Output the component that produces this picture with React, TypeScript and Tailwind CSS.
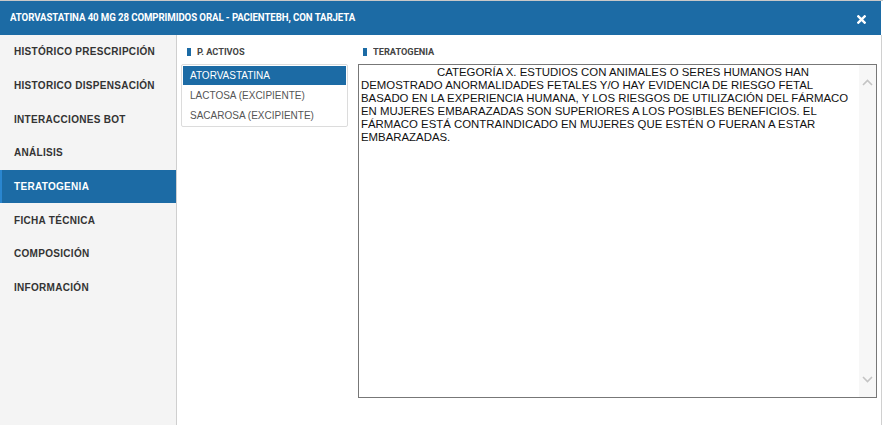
import React from 'react';

const NAV = [
  'HISTÓRICO PRESCRIPCIÓN',
  'HISTORICO DISPENSACIÓN',
  'INTERACCIONES BOT',
  'ANÁLISIS',
  'TERATOGENIA',
  'FICHA TÉCNICA',
  'COMPOSICIÓN',
  'INFORMACIÓN',
];

const ACTIVOS = ['ATORVASTATINA', 'LACTOSA (EXCIPIENTE)', 'SACAROSA (EXCIPIENTE)'];

const TEXT =
  'CATEGORÍA X. ESTUDIOS CON ANIMALES O SERES HUMANOS HAN DEMOSTRADO ANORMALIDADES FETALES Y/O HAY EVIDENCIA DE RIESGO FETAL BASADO EN LA EXPERIENCIA HUMANA, Y LOS RIESGOS DE UTILIZACIÓN DEL FÁRMACO EN MUJERES EMBARAZADAS SON SUPERIORES A LOS POSIBLES BENEFICIOS. EL FÁRMACO ESTÁ CONTRAINDICADO EN MUJERES QUE ESTÉN O FUERAN A ESTAR EMBARAZADAS.';

const SectionTitle: React.FC<{ label: string }> = ({ label }) => (
  <div className="flex items-center gap-[6px] h-[12px]">
    <span className="w-[4px] h-[8px] bg-[#1c6ba5]" />
    <span className="text-[9.5px] font-bold text-[#444] [font-family:Roboto,sans-serif] scale-x-[0.97] origin-left">
      {label}
    </span>
  </div>
);

export default function App() {
  return (
    <div className="w-[883px] h-[425px] bg-white flex flex-col border-t border-[#c8c8c8] [font-family:'Liberation_Sans',Arial,sans-serif]">
      <div className="h-[34px] w-[881px] bg-[#1c6ba5] flex items-center justify-between pl-[10px] pr-[15px] shrink-0">
        <span className="text-white text-[10.5px] font-bold [font-family:Roboto,sans-serif] tracking-[-0.1px] scale-x-[0.92] origin-left whitespace-nowrap">
          ATORVASTATINA 40 MG 28 COMPRIMIDOS ORAL - PACIENTEBH, CON TARJETA
        </span>
        <svg width="9" height="9" viewBox="0 0 10 10" className="mt-[2px]">
          <path d="M1.5 1.5 L8.5 8.5 M8.5 1.5 L1.5 8.5" stroke="#fff" strokeWidth="2.6" strokeLinecap="square" />
        </svg>
      </div>
      <div className="flex flex-1 w-[882px] border-r border-[#d0d0d0]">
        <div className="w-[177px] bg-[#f4f4f4] border-r border-[#cfcfcf] flex flex-col shrink-0">
          {NAV.map((n) => {
            const active = n === 'TERATOGENIA';
            return (
              <div
                key={n}
                className={
                  'h-[33.7px] flex items-center text-[10px] font-bold tracking-[0.3px] ' +
                  (active
                    ? 'bg-[#1c6ba5] text-white border-l-2 border-[#2a86d0] pl-[12px]'
                    : 'text-[#333] pl-[14px]')
                }
              >
                {n}
              </div>
            );
          })}
        </div>
        <div className="w-[176px] flex flex-col pt-[11px] px-[4px] shrink-0">
          <div className="pl-[6px]">
            <SectionTitle label="P. ACTIVOS" />
          </div>
          <div className="mt-[6px] border border-[#dcdcdc] rounded-[2px] p-[1px] w-[167px] bg-white">
            {ACTIVOS.map((a, i) => (
              <div
                key={a}
                className={
                  'flex items-center pl-[7px] text-[10px] ' +
                  (i === 0 ? 'bg-[#1c6ba5] text-white h-[19px]' : 'text-[#555] h-[20px]')
                }
              >
                {a}
              </div>
            ))}
          </div>
        </div>
        <div className="flex-1 flex flex-col pt-[11px] pl-[5px] pr-[4px]">
          <div className="pl-[5px]">
            <SectionTitle label="TERATOGENIA" />
          </div>
          <div className="mt-[6px] h-[334px] border border-[#777] flex bg-white">
            <div className="flex-1 pl-[2px] pr-[4px] pt-[1px] text-[11.4px] leading-[13px] text-[#111]">
              <span className="inline-block w-[76px]" />
              {TEXT}
            </div>
            <div className="w-[17px] bg-[#f7f7f7] flex flex-col items-center justify-between pt-[14px] pb-[14px]">
              <svg width="11" height="7" viewBox="0 0 11 7">
                <path d="M1 6 L5.5 1.5 L10 6" fill="none" stroke="#c4c4c4" strokeWidth="1.6" />
              </svg>
              <svg width="11" height="7" viewBox="0 0 11 7">
                <path d="M1 1 L5.5 5.5 L10 1" fill="none" stroke="#c4c4c4" strokeWidth="1.6" />
              </svg>
            </div>
          </div>
        </div>
      </div>
    </div>
  );
}
